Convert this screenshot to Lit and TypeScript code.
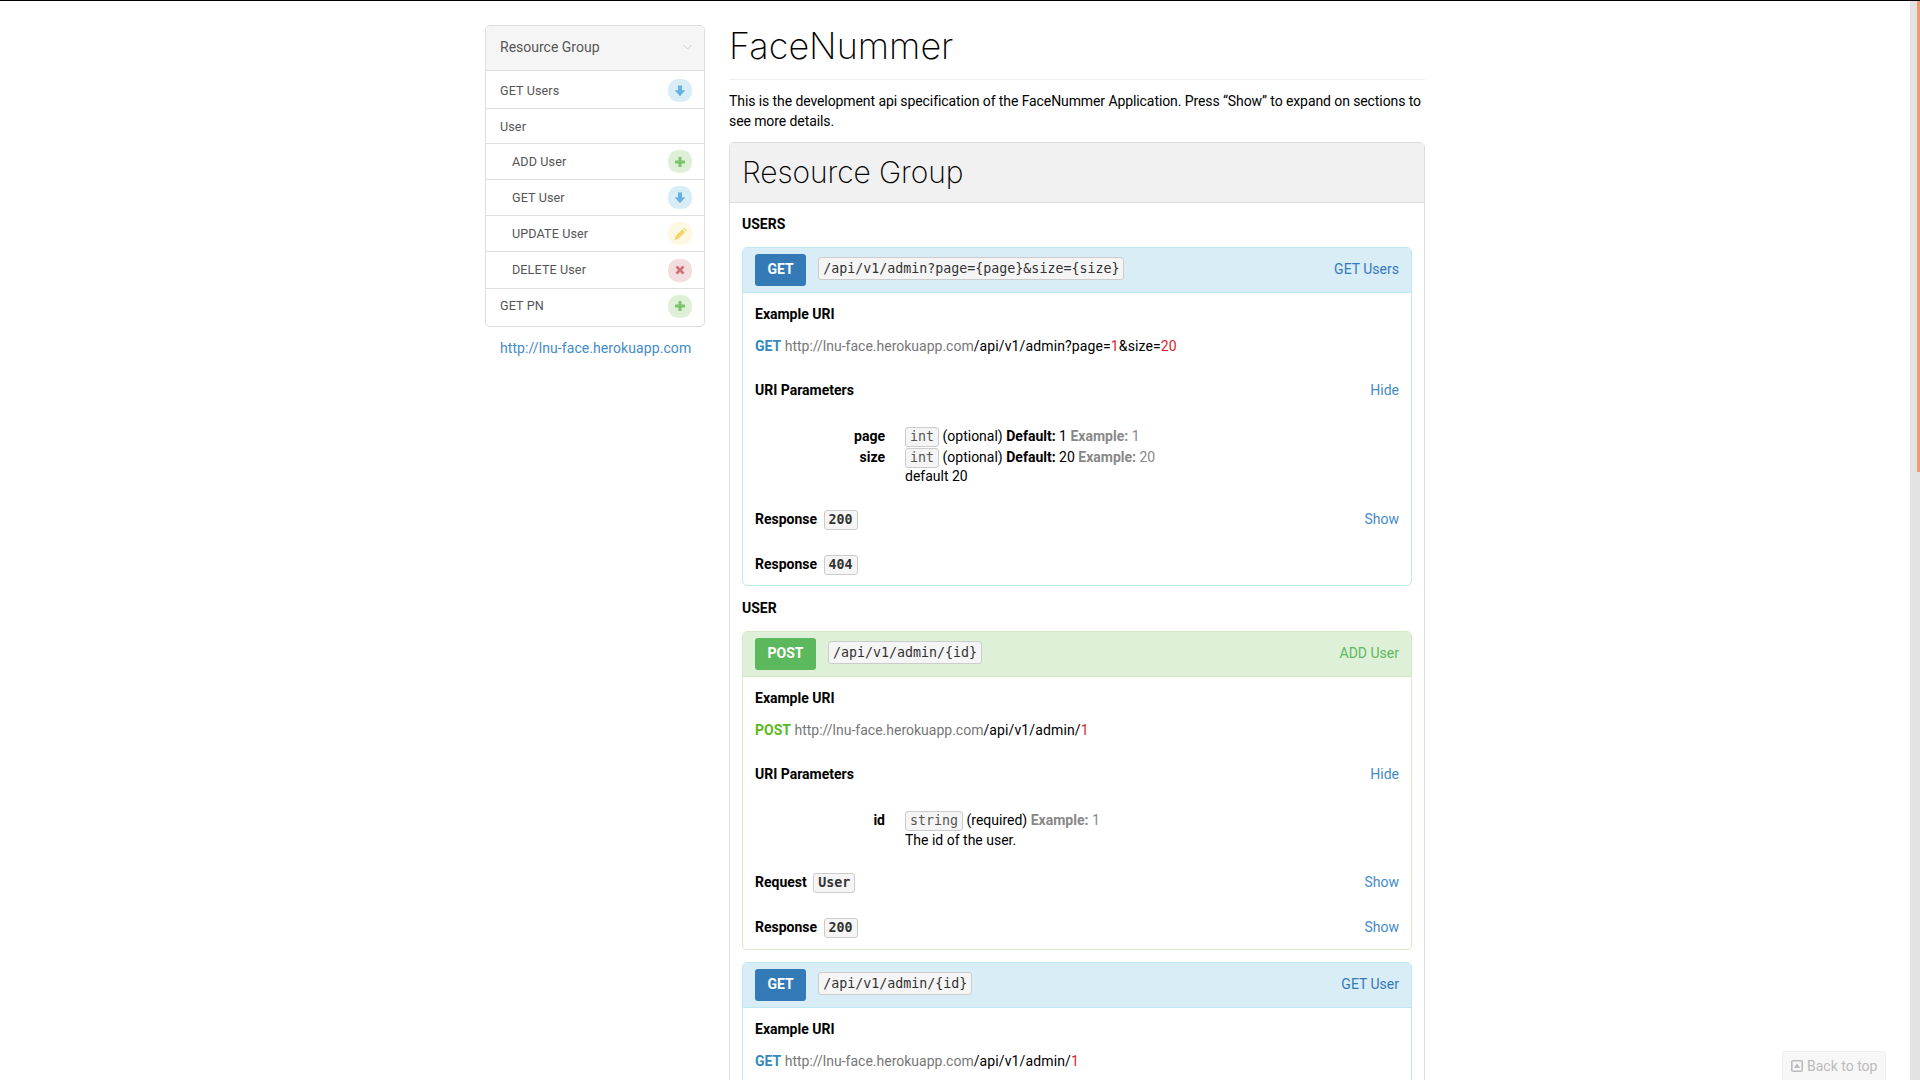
import { LitElement, html, css, svg } from 'lit';
import { customElement } from 'lit/decorators.js';

type Kind = 'get' | 'post' | 'put' | 'del';

const ICONS: Record<Kind, unknown> = {
  get: svg`<path d="M5 1.500h4v4.700h3.300L7 12.200 1.700 6.200H5z"/>`,
  post: svg`<path d="M5.500 2h3v3.500H12v3H8.500V12h-3V8.500H2v-3h3.500z"/>`,
  put: svg`<path d="M9.400 2.400l2.700 2.700-6.700 6.700-3.900 1.100 1.100-3.800zM10.300 1.500l.9-.8 2.600 2.600-.8.900z"/>`,
  del: svg`<path d="M4.400 2.600L7 5.200l2.600-2.600 1.900 1.900L8.900 7l2.600 2.600-1.900 1.900L7 8.900l-2.600 2.600-1.900-1.900L5.100 7 2.500 4.500z"/>`,
};

const NAV: { label: string; kind?: Kind; sub?: boolean; cls?: string }[] = [
  { label: 'GET Users', kind: 'get', cls: 'first' },
  { label: 'User', cls: 'short' },
  { label: 'ADD User', kind: 'post', sub: true },
  { label: 'GET User', kind: 'get', sub: true },
  { label: 'UPDATE User', kind: 'put', sub: true },
  { label: 'DELETE User', kind: 'del', sub: true, cls: 'mid' },
  { label: 'GET PN', kind: 'post', cls: 'last' },
];

@customElement('app-root')
export class AppRoot extends LitElement {
  static styles = css`
    :host {
      display: flex;
      height: 1080px;
      overflow: hidden;
      position: relative;
      background: #fff;
      font-family: Roboto, sans-serif;
      font-size: 14px;
      line-height: 20px;
      color: #000;
    }
    * { box-sizing: border-box; }

    .page {
      flex: 1;
      display: flex;
      align-items: flex-start;
      gap: 24px;
      padding-left: 485px;
      border-top: 1px solid #000;
      min-width: 0;
    }
    .scrollbar {
      width: 10px;
      background: #e3e3e3;
      padding-left: 7px;
      border-top: 1px solid #000;
    }
    .thumb { height: 471px; background: #f29a6f; }

    /* sidebar */
    .sidebar { width: 220px; flex: none; margin-top: 24px; }
    .nav {
      border: 1px solid #ddd;
      border-radius: 5px;
      overflow: hidden;
      color: #555;
    }
    .nav-head {
      height: 44px;
      background: #f5f5f5;
      display: flex;
      align-items: center;
      justify-content: space-between;
      padding: 0 12px 2px 14px;
    }
    .chev { width: 9px; height: 6px; fill: none; stroke: #ccc; stroke-width: 1; }
    .nav-item {
      height: 36px;
      border-top: 1px solid #ddd;
      display: flex;
      align-items: center;
      justify-content: space-between;
      padding: 0 12px 0 14px;
      font-size: 12.6px;
      letter-spacing: 0.1px;
    }
    .nav-item.sub { padding-left: 26px; }
    .nav-item.first { height: 38px; padding-top: 2px; }
    .nav-item.last { height: 38px; padding-bottom: 3px; }
    .nav-item.short { height: 35px; padding-top: 1px; }
    .nav-item.mid { height: 37px; }
    .badge {
      width: 24px;
      height: 23px;
      border-radius: 10px;
      display: flex;
      align-items: center;
      justify-content: center;
    }
    .badge svg { width: 14px; height: 14px; }
    .badge.get { background: #d9edf7; fill: #66b2e0; }
    .badge.post { background: #dff0d8; fill: #7cc46c; }
    .badge.put { background: #fcf8e3; fill: #f0d468; }
    .badge.del { background: #f2dede; fill: #d07078; }
    .home {
      display: block;
      color: #428bca;
      margin: 11px 0 0 15px;
      white-space: nowrap;
      letter-spacing: 0.08px;
    }

    /* main column */
    .main { width: 696px; flex: none; }
    h1 {
      margin: 25px 0 0;
      height: 54px;
      border-bottom: 1px solid #eee;
      font: 150 36px/40px Inter, sans-serif;
      color: #000;
    }
    .intro { margin: 11px 0 11px; letter-spacing: -0.09px; }
    .group {
      border: 1px solid #ddd;
      border-radius: 5px 5px 0 0;
    }
    .group-head {
      height: 60px;
      background: #f1f1f1;
      border-bottom: 1px solid #ddd;
      padding: 9px 12px 0;
      font: 150 30px/40px Inter, sans-serif;
      letter-spacing: -0.1px;
    }
    .resource { padding: 0 12px; }
    h4 {
      margin: 10px 0 13px;
      font-size: 14px;
      line-height: 20px;
      font-weight: 700;
      text-transform: uppercase;
    }
    .resource.top h4 { margin-top: 11px; }
    .resource.top .action-body { padding-bottom: 11px; }
    .resource.top .desc { margin-top: -2px; }
    .resource.top .params { margin-bottom: 23px; }
    .action {
      border: 1px solid #bce8f1;
      border-radius: 5px;
      margin-bottom: 12px;
    }
    .action.post { border-color: #d6e9c6; }
    .action-head {
      height: 45px;
      background: #d9edf7;
      border-bottom: 1px solid #bce8f1;
      border-radius: 4px 4px 0 0;
      padding: 6px 12px 0;
      display: flex;
      align-items: flex-start;
      gap: 12px;
    }
    .post .action-head { background: #dff0d8; border-color: #d6e9c6; }
    .method {
      height: 32px;
      padding: 0 12.5px;
      background: #337ab7;
      border-radius: 3px;
      color: #fff;
      font-weight: 700;
      line-height: 30px;
    }
    .post .method { background: #5cb85c; }
    .code {
      display: inline-block;
      font-family: "DejaVu Sans Mono", monospace;
      font-size: 13.3px;
      line-height: 18px;
      padding: 0 4px;
      background: #f5f5f5;
      border: 1px solid #ccc;
      border-radius: 3px;
      color: #333;
    }
    .action-head .code { margin-top: 3px; line-height: 21px; }
    .action-title { margin-left: auto; line-height: 30px; color: #337ab7; }
    .post .action-title { color: #5cb85c; }
    .action-body { padding: 11px 12px 12px; }
    .action-body.cut { height: 90px; }
    .line { height: 20px; display: flex; justify-content: space-between; align-items: center; }
    .line b .code { margin-left: 3px; font-weight: 700; }
    .uri { margin: 12px 0 24px; line-height: 20px; }
    .uri .verb { font-weight: 700; color: #3389c0; }
    .post .uri .verb { color: #5cb81e; }
    .uri .host { color: #777; }
    .uri .path { letter-spacing: 0.12px; }
    .uri .val { color: #d9232e; }
    a { color: #428bca; font-weight: 400; }
    .params {
      display: grid;
      grid-template-columns: 130px 1fr;
      column-gap: 20px;
      margin: 26px 0 22px;
    }
    .params dt { text-align: right; font-weight: 700; line-height: 20px; }
    .params dd { margin: 0; line-height: 20px; }
    .params dd .code { color: #555; }
    .desc { margin-top: -1px; }
    .muted { color: #888; }
    .next { margin-top: 25px; }

    .back {
      position: absolute;
      left: 1782px;
      top: 1051px;
      width: 104px;
      height: 29px;
      padding: 4px 8px 0;
      background: #f7f7f7;
      border: 1px solid #eee;
      border-bottom: 0;
      border-radius: 3px 3px 0 0;
      color: #bbb;
      display: flex;
      gap: 4px;
      align-items: flex-start;
      white-space: nowrap;
    }
    .back svg { width: 12px; height: 12px; margin-top: 4px; flex: none; fill: #bbb; }
  `;

  private badge(kind?: Kind) {
    if (!kind) return '';
    return html`<span class="badge ${kind}"><svg viewBox="0 0 14 14">${ICONS[kind]}</svg></span>`;
  }

  private sidebar() {
    return html`
      <nav class="sidebar">
        <div class="nav">
          <div class="nav-head">
            <span>Resource Group</span>
            <svg class="chev" viewBox="0 0 9 6"><path d="M.5 1l4 4 4-4"/></svg>
          </div>
          ${NAV.map(
            (n) => html`<div class="nav-item ${n.sub ? 'sub' : ''} ${n.cls ?? ''}">
              <span>${n.label}</span>${this.badge(n.kind)}
            </div>`
          )}
        </div>
        <a class="home">http://lnu-face.herokuapp.com</a>
      </nav>
    `;
  }

  private head(method: string, path: string, title: string) {
    return html`<div class="action-head">
      <span class="method">${method}</span>
      <span class="code">${path}</span>
      <span class="action-title">${title}</span>
    </div>`;
  }

  private uri(verb: string, rest: unknown) {
    return html`<div class="uri">
      <span class="verb">${verb}</span>
      <span class="host">http://lnu-face.herokuapp.com</span><span class="path">${rest}</span>
    </div>`;
  }

  render() {
    return html`
      <div class="page">
        ${this.sidebar()}
        <main class="main">
          <h1>FaceNummer</h1>
          <p class="intro">
            This is the development api specification of the FaceNummer Application. Press “Show” to expand on sections to see more details.
          </p>
          <section class="group">
            <div class="group-head">Resource Group</div>
            <div class="resource top">
              <h4>Users</h4>
              <div class="action get">
                ${this.head('GET', '/api/v1/admin?page={page}&size={size}', 'GET Users')}
                <div class="action-body">
                  <div class="line"><b>Example URI</b></div>
                  ${this.uri('GET', html`/api/v1/admin?page=<span class="val">1</span>&amp;size=<span class="val">20</span>`)}
                  <div class="line"><b>URI Parameters</b><a>Hide</a></div>
                  <dl class="params">
                    <dt>page</dt>
                    <dd><span class="code">int</span> (optional) <b>Default:</b> 1 <b class="muted">Example:</b> <span class="muted">1</span></dd>
                    <dt>size</dt>
                    <dd><span class="code">int</span> (optional) <b>Default:</b> 20 <b class="muted">Example:</b> <span class="muted">20</span><div class="desc">default 20</div></dd>
                  </dl>
                  <div class="line"><b>Response <span class="code">200</span></b><a>Show</a></div>
                  <div class="line next"><b>Response <span class="code">404</span></b></div>
                </div>
              </div>
            </div>
            <div class="resource">
              <h4>User</h4>
              <div class="action post">
                ${this.head('POST', '/api/v1/admin/{id}', 'ADD User')}
                <div class="action-body">
                  <div class="line"><b>Example URI</b></div>
                  ${this.uri('POST', html`/api/v1/admin/<span class="val">1</span>`)}
                  <div class="line"><b>URI Parameters</b><a>Hide</a></div>
                  <dl class="params">
                    <dt>id</dt>
                    <dd><span class="code">string</span> (required) <b class="muted">Example:</b> <span class="muted">1</span><div class="desc">The id of the user.</div></dd>
                  </dl>
                  <div class="line"><b>Request <span class="code">User</span></b><a>Show</a></div>
                  <div class="line next"><b>Response <span class="code">200</span></b><a>Show</a></div>
                </div>
              </div>
              <div class="action get">
                ${this.head('GET', '/api/v1/admin/{id}', 'GET User')}
                <div class="action-body cut">
                  <div class="line"><b>Example URI</b></div>
                  ${this.uri('GET', html`/api/v1/admin/<span class="val">1</span>`)}
                </div>
              </div>
            </div>
          </section>
        </main>
      </div>
      <div class="scrollbar"><div class="thumb"></div></div>
      <div class="back">
        <svg viewBox="0 0 12 12"><path fill-rule="evenodd" d="M2 0h8a2 2 0 0 1 2 2v8a2 2 0 0 1-2 2H2a2 2 0 0 1-2-2V2a2 2 0 0 1 2-2zm-.4 1.600v8.800h8.800V1.600zM6 3.500L9.200 8H2.800z"/></svg>
        <span>Back to top</span>
      </div>
    `;
  }
}
